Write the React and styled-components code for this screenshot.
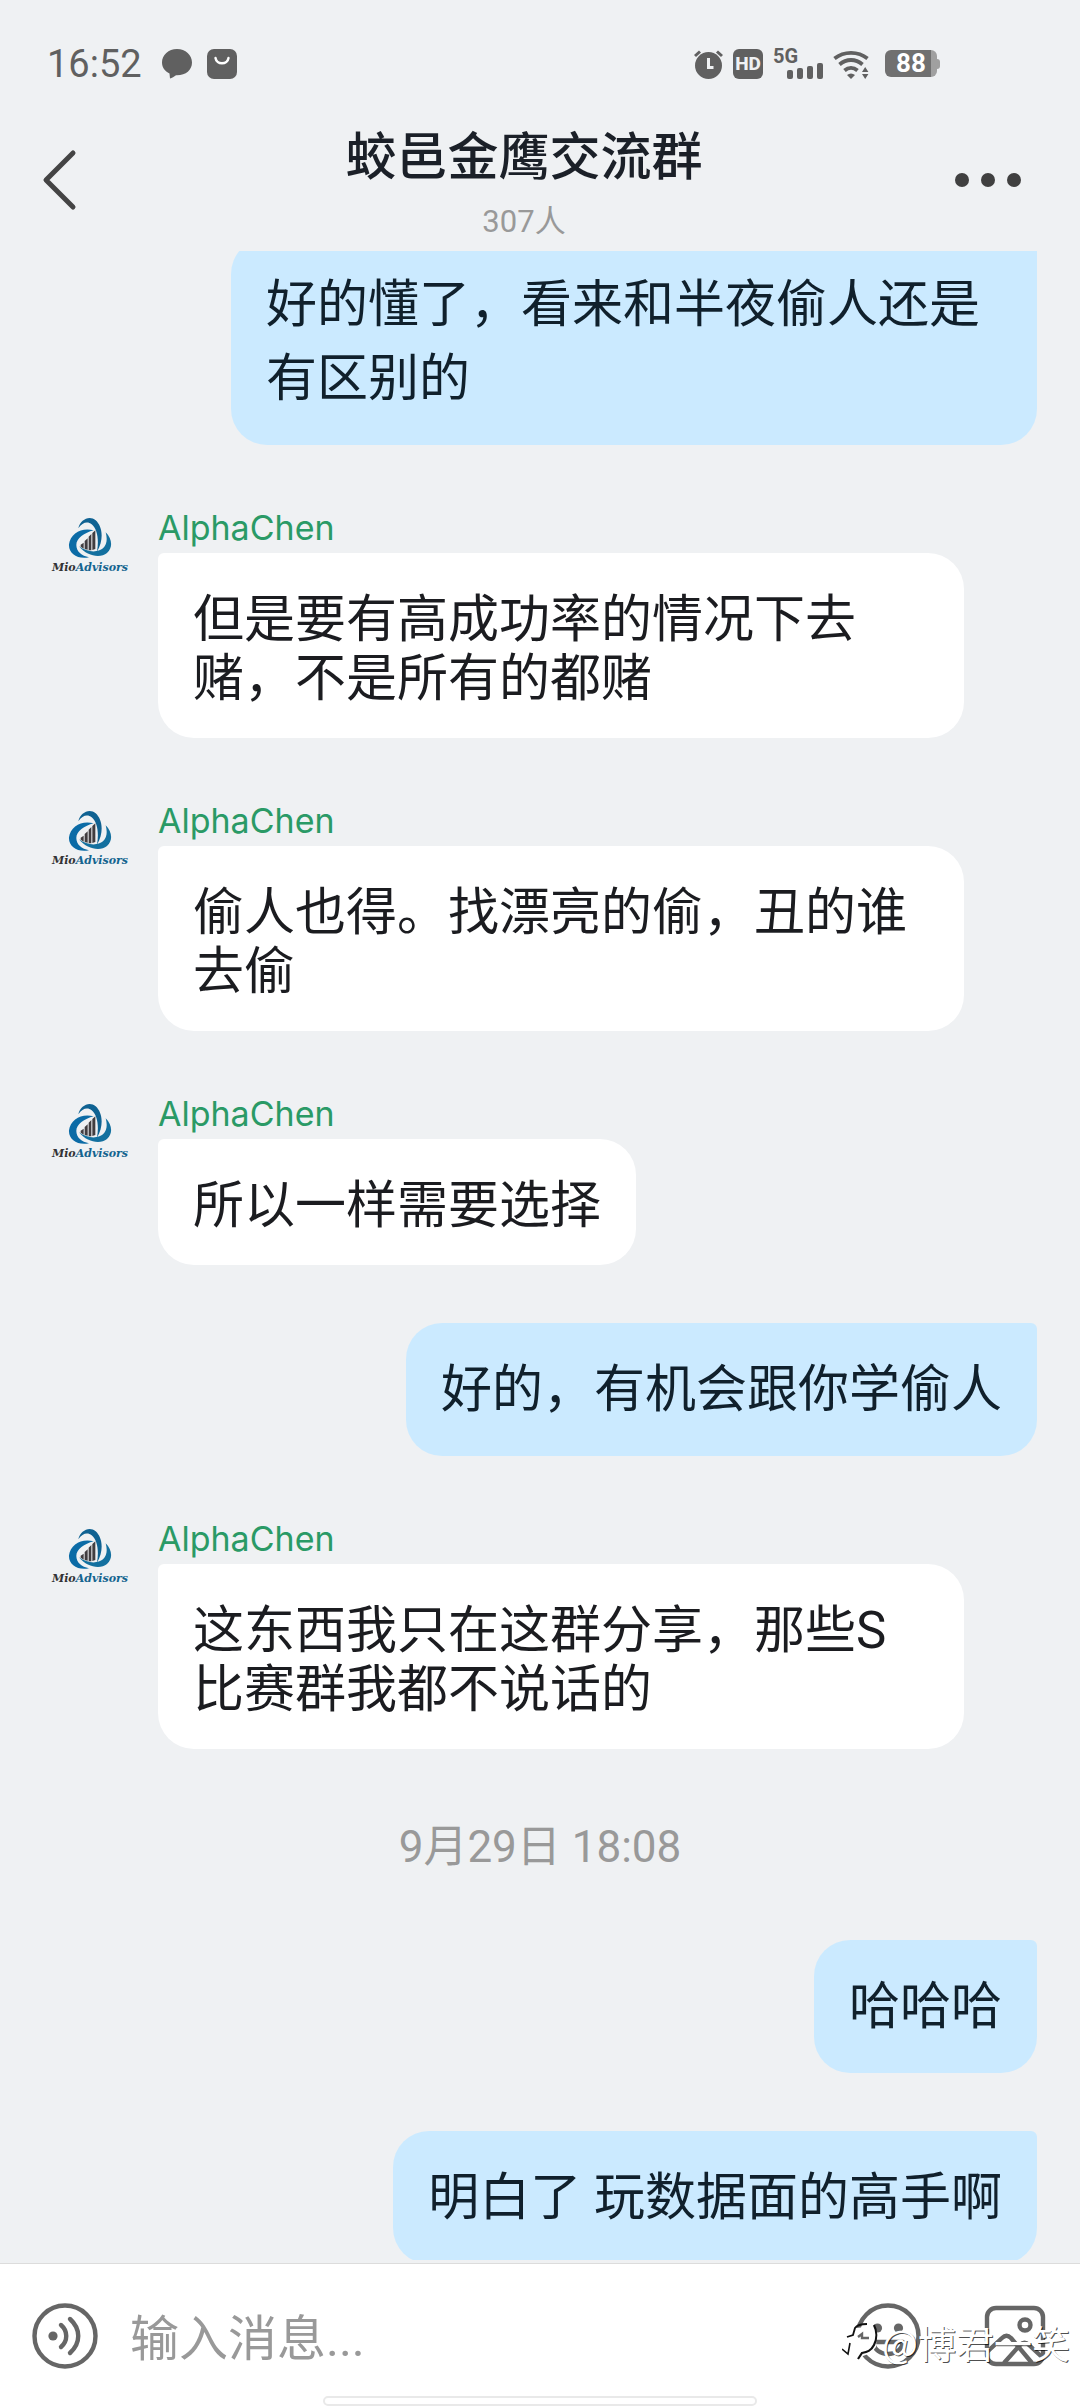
import React from "react";
import styled, { createGlobalStyle } from "styled-components";

const GlobalStyle = createGlobalStyle`
  * { box-sizing: border-box; }
  body {
    margin: 0;
    background: #eff1f3;
    font-family: Roboto, "Noto Sans CJK SC", sans-serif;
  }
  button, input { font-family: inherit; }
`;

const Screen = styled.div`
  display: flex;
  flex-direction: column;
  height: 100vh;
  overflow: hidden;
`;

/* ---------- status bar ---------- */

const StatusBar = styled.div`
  display: flex;
  flex: none;
  justify-content: space-between;
  align-items: center;
  height: 109px;
  padding: 18px 140px 0 47px;
  color: #606060;
`;

const StatusGroup = styled.div`
  display: flex;
  align-items: center;
  gap: ${(p) => p.$gap}px;
`;

const Clock = styled.time`
  margin-right: 5px;
  font-size: 38px;
  line-height: 44px;
`;

const HdBadge = styled.span`
  width: 30px;
  border-radius: 6px;
  background: #606060;
  color: #eff1f3;
  font-size: 19px;
  font-weight: 800;
  line-height: 30px;
  text-align: center;
`;

const Signal = styled.span`
  display: flex;
  flex-direction: column;
  width: 50px;
  height: 30px;
`;

const SignalLabel = styled.span`
  height: 14px;
  font-size: 20px;
  font-weight: 700;
  line-height: 14px;
`;

const SignalBars = styled.svg`
  align-self: flex-end;
  width: 36px;
  height: 16px;
`;

const Battery = styled.span`
  display: flex;
  align-items: center;
  width: 55px;
  margin-left: 6px;
`;

const BatteryCell = styled.span`
  width: 52px;
  border-radius: 6px;
  background: linear-gradient(90deg, #707070 88%, #a0a0a0 88%);
  color: #fff;
  font-size: 26px;
  font-weight: 700;
  line-height: 27px;
  text-align: center;
`;

const BatteryTip = styled.span`
  width: 3px;
  height: 10px;
  border-radius: 0 3px 3px 0;
  background: #a0a0a0;
`;

/* ---------- title bar ---------- */

const TitleBar = styled.header`
  display: grid;
  flex: none;
  grid-template-columns: 108px 1fr 140px;
  align-items: center;
  height: 142px;
`;

const IconButton = styled.button`
  display: flex;
  flex: none;
  padding: 0;
  border: 0;
  background: none;
  cursor: pointer;
`;

const BackButton = styled(IconButton)`
  justify-self: start;
  margin-left: 40px;
`;

const MoreButton = styled(IconButton)`
  justify-self: end;
  margin-right: 59px;
`;

const TitleBlock = styled.div`
  padding-top: 14px;
  text-align: center;
`;

const Title = styled.h1`
  margin: 0;
  color: #1b2028;
  font-size: 51px;
  font-weight: 500;
  line-height: 70px;
`;

const Members = styled.p`
  margin: 0;
  color: #999;
  font-size: 31px;
  line-height: 58px;
`;

/* ---------- messages ---------- */

const Chat = styled.main`
  flex: 1;
  min-height: 0;
  overflow: hidden;
`;

const Messages = styled.ol`
  display: flex;
  flex-direction: column;
  gap: 58px;
  margin: -13px 0 0;
  padding: 0 43px;
  list-style: none;
`;

const Row = styled.li`
  display: flex;
  justify-content: ${(p) => (p.$mine ? "flex-end" : "flex-start")};
`;

const Avatar = styled.div`
  display: flex;
  flex: none;
  flex-direction: column;
  align-items: center;
  width: 94px;
  margin-right: 21px;
  padding-top: 14px;
`;

const AvatarName = styled.span`
  color: #333;
  font-family: "DejaVu Serif", serif;
  font-size: 11px;
  font-style: italic;
  font-weight: 700;
  line-height: 18px;

  span { color: #14648f; }
`;

const Incoming = styled.div`
  display: flex;
  flex-direction: column;
  align-items: flex-start;
`;

const Sender = styled.span`
  color: #2a9a66;
  font-family: Inter, Roboto, sans-serif;
  font-size: 34px;
  line-height: 50px;
`;

const Bubble = styled.p`
  max-width: 806px;
  margin: 0;
  padding: ${(p) => (p.$mine ? "30px 35px 29px" : "37px 35px 30px")};
  border-radius: ${(p) => (p.$mine ? "36px 6px 36px 36px" : "6px 36px 36px 36px")};
  background: ${(p) => (p.$mine ? "#cbeaff" : "#fff")};
  color: ${(p) => (p.$mine ? "#10202c" : "#1b1c20")};
  font-size: 51px;
  line-height: ${(p) => (p.$mine ? 74 : 59)}px;
`;

const DateMark = styled.li`
  padding-top: 5px;
  color: #999;
  font-size: 44px;
  line-height: 70px;
  text-align: center;
`;

/* ---------- composer ---------- */

const Composer = styled.footer`
  position: relative;
  flex: none;
  border-top: 1px solid #dcdcdc;
  outline: 3px solid #eff1f3;
  background: #fff;
`;

const ComposerRow = styled.div`
  display: flex;
  align-items: center;
  height: 132px;
  padding: 12px 32px 0;
  gap: 32px;
`;

const MessageInput = styled.input`
  flex: 1;
  min-width: 0;
  height: 72px;
  padding: 6px 0 0;
  border: 0;
  outline: 0;
  background: none;
  color: #1b1c20;
  font-size: 49px;

  &::placeholder { color: #999; opacity: 1; }
`;

const Tools = styled.div`
  display: flex;
  gap: 61px;
`;

const HomeIndicator = styled.div`
  width: 434px;
  height: 10px;
  margin: 0 auto 2px;
  border: 2px solid #e9e9e9;
  border-radius: 5px;
`;

const Watermark = styled.div`
  position: absolute;
  right: 10px;
  bottom: 39px;
  display: flex;
  align-items: center;
  gap: 2px;
  color: #fff;
  font-family: "Noto Sans CJK SC", sans-serif;
  font-size: 38px;
  line-height: 54px;
  text-shadow: 1px 1px 0 rgba(0, 0, 0, 0.7);
  pointer-events: none;
`;

/* ---------- drawings ---------- */

const ChatIcon = () => (
  <svg width="30" height="30" viewBox="0 0 30 30" fill="currentColor" aria-hidden="true">
    <path d="M15 0C6.500 0 0 6 0 13.500c0 5 2.800 8.800 7.500 11L8 29.500c2-.4 4-1.600 6-3.200h1c9 0 15-5.500 15-12.800S23.500 0 15 0z" />
  </svg>
);

const BagIcon = () => (
  <svg width="30" height="30" viewBox="0 0 30 30" aria-hidden="true">
    <rect width="30" height="30" rx="7" fill="currentColor" />
    <path d="M8.500 9c1 7 12 7 13 0" fill="none" stroke="#fff" strokeWidth="2.400" strokeLinecap="round" />
  </svg>
);

const AlarmIcon = () => (
  <svg width="29" height="30" viewBox="0 0 29 30" fill="none" aria-hidden="true">
    <circle cx="14.500" cy="16.500" r="13.500" fill="currentColor" />
    <path d="M1 7l5-4.500M28 7l-5-4.500" stroke="currentColor" strokeWidth="3" />
    <path d="M14.500 9v9.500h5" stroke="#eff1f3" strokeWidth="3" />
  </svg>
);

const WifiIcon = () => (
  <svg width="36" height="30" viewBox="0 0 36 30" fill="none" aria-hidden="true">
    <g stroke="currentColor" strokeWidth="3.800">
      <path d="M1.500 9.500C11 2 25 2 34.500 9.500" />
      <path d="M6.500 15.500c7-6 16-6 23 0" />
      <path d="M11.500 21.500c4-3.500 9-3.500 13 0" />
    </g>
    <path d="M14 26c2.500-2 5.500-2 8 0L18 30zM29 23l3.200-5 3.200 5zM29 25l3.200 5 3.200-5z" fill="currentColor" />
  </svg>
);

const BackIcon = () => (
  <svg width="38" height="62" viewBox="0 0 38 62" fill="none" aria-hidden="true">
    <path d="M33 4L6 31l27 27" stroke="#444" strokeWidth="5" strokeLinecap="round" strokeLinejoin="round" />
  </svg>
);

const MoreIcon = () => (
  <svg width="66" height="16" viewBox="0 0 66 16" fill="#404040" aria-hidden="true">
    <circle cx="7" cy="8" r="7" />
    <circle cx="33" cy="8" r="7" />
    <circle cx="59" cy="8" r="7" />
  </svg>
);

const LogoMark = () => (
  <svg width="44" height="42" viewBox="81 36 132 126" aria-hidden="true">
    <path fill="#0f6292" d="M112 70C118 44 145 30 164 46c20 18 26 56 4 94 6-34 2-66-16-82-12-10-28-6-40 12z" />
    <path fill="#0b6ba6" d="M158 76c-34-10-70 8-74 42-2 28 26 46 60 39-22-5-38-17-38-37 0-20 24-36 52-44z" />
    <path fill="#13709f" d="M194 82c20 20 22 46 4 62-20 17-60 10-84-20 24 18 56 20 72 6 13-12 13-30 8-48z" />
    <path fill="#413d40" d="M119 119l9-6v18l-9-6zM131 108l9-8v34l-9-2zM143 95l8-8v49h-8zM154 84l9-8v56l-9 3z" />
  </svg>
);

const VoiceIcon = () => (
  <svg width="66" height="66" viewBox="0 0 66 66" fill="none" stroke="#666" strokeWidth="4.400" strokeLinecap="round" aria-hidden="true">
    <circle cx="33" cy="33" r="30.500" />
    <circle cx="21" cy="33" r="4.600" fill="#666" stroke="none" />
    <path d="M29 22c7 6 7 16 0 22" />
    <path d="M38 16c11 10 11 24 0 34" />
  </svg>
);

const SmileIcon = () => (
  <svg width="66" height="66" viewBox="0 0 66 66" fill="none" stroke="#666" strokeWidth="4.400" strokeLinejoin="round" aria-hidden="true">
    <circle cx="33" cy="33" r="30.500" />
    <circle cx="22.500" cy="25" r="4.600" fill="#666" stroke="none" />
    <circle cx="43.500" cy="25" r="4.600" fill="#666" stroke="none" />
    <path d="M18 39h30c-2 16-28 16-30 0z" />
  </svg>
);

const PictureIcon = () => (
  <svg width="66" height="66" viewBox="0 0 66 66" fill="none" stroke="#666" strokeWidth="4.400" strokeLinejoin="round" aria-hidden="true">
    <rect x="5" y="5" width="56" height="56" rx="9" />
    <circle cx="43" cy="22" r="5.500" />
    <path d="M5 49l15-14c3-3 6-3 9 0l21 25M22 60l16-18c3-3 6-3 9 0l14 13" />
  </svg>
);

const WatermarkIcon = () => (
  <svg width="38" height="38" viewBox="0 0 38 38" aria-hidden="true">
    <path d="M0 25l6 5 5-14 3-11 19-2 2 8-1 13-5 6-8 3-6 5z" fill="#fff" />
    <path d="M5 14l6-2 2-7c2-3 8-4 12-4" fill="none" stroke="#111" strokeWidth="1.800" />
    <path d="M32 2c3 6 3 14 0 20-3 6-7 7-12 8l-4 6" fill="none" stroke="#111" strokeWidth="2.200" />
    <path d="M0 26l6 5 2-11" fill="none" stroke="#111" strokeWidth="1.600" />
    <path d="M16 14l4-3v4h7" fill="none" stroke="#666" strokeWidth="2.400" />
  </svg>
);

/* ---------- content ---------- */

const items = [
  { mine: true, text: "好的懂了，看来和半夜偷人还是有区别的" },
  { text: "但是要有高成功率的情况下去赌，不是所有的都赌" },
  { text: "偷人也得。找漂亮的偷，丑的谁去偷" },
  { text: "所以一样需要选择" },
  { mine: true, text: "好的，有机会跟你学偷人" },
  { text: "这东西我只在这群分享，那些S比赛群我都不说话的" },
  { date: "9月29日 18:08" },
  { mine: true, text: "哈哈哈" },
  { mine: true, text: "明白了 玩数据面的高手啊" },
];

function Message({ item }) {
  if (item.date) return <DateMark>{item.date}</DateMark>;
  if (item.mine) {
    return (
      <Row $mine>
        <Bubble $mine>{item.text}</Bubble>
      </Row>
    );
  }
  return (
    <Row>
      <Avatar>
        <LogoMark />
        <AvatarName>Mio<span>Advisors</span></AvatarName>
      </Avatar>
      <Incoming>
        <Sender>AlphaChen</Sender>
        <Bubble>{item.text}</Bubble>
      </Incoming>
    </Row>
  );
}

export default function App() {
  return (
    <Screen>
      <GlobalStyle />
      <StatusBar>
        <StatusGroup $gap={15}>
          <Clock>16:52</Clock>
          <ChatIcon />
          <BagIcon />
        </StatusGroup>
        <StatusGroup $gap={10}>
          <AlarmIcon />
          <HdBadge>HD</HdBadge>
          <Signal>
            <SignalLabel>5G</SignalLabel>
            <SignalBars viewBox="0 0 36 16" fill="currentColor" aria-hidden="true">
              <rect x="0" y="7" width="6" height="9" rx="2" />
              <rect x="10" y="5" width="6" height="11" rx="2" />
              <rect x="20" y="3" width="6" height="13" rx="2" />
              <rect x="30" y="0" width="6" height="16" rx="2" />
            </SignalBars>
          </Signal>
          <WifiIcon />
          <Battery>
            <BatteryCell>88</BatteryCell>
            <BatteryTip />
          </Battery>
        </StatusGroup>
      </StatusBar>

      <TitleBar>
        <BackButton aria-label="返回"><BackIcon /></BackButton>
        <TitleBlock>
          <Title>蛟邑金鹰交流群</Title>
          <Members>307人</Members>
        </TitleBlock>
        <MoreButton aria-label="更多"><MoreIcon /></MoreButton>
      </TitleBar>

      <Chat>
        <Messages>
          {items.map((item, i) => (
            <Message key={i} item={item} />
          ))}
        </Messages>
      </Chat>

      <Composer>
        <ComposerRow>
          <IconButton aria-label="语音"><VoiceIcon /></IconButton>
          <MessageInput aria-label="输入消息" placeholder="输入消息..." />
          <Tools>
            <IconButton aria-label="表情"><SmileIcon /></IconButton>
            <IconButton aria-label="图片"><PictureIcon /></IconButton>
          </Tools>
        </ComposerRow>
        <HomeIndicator />
        <Watermark>
          <WatermarkIcon />
          <span>@博君一笑</span>
        </Watermark>
      </Composer>
    </Screen>
  );
}
